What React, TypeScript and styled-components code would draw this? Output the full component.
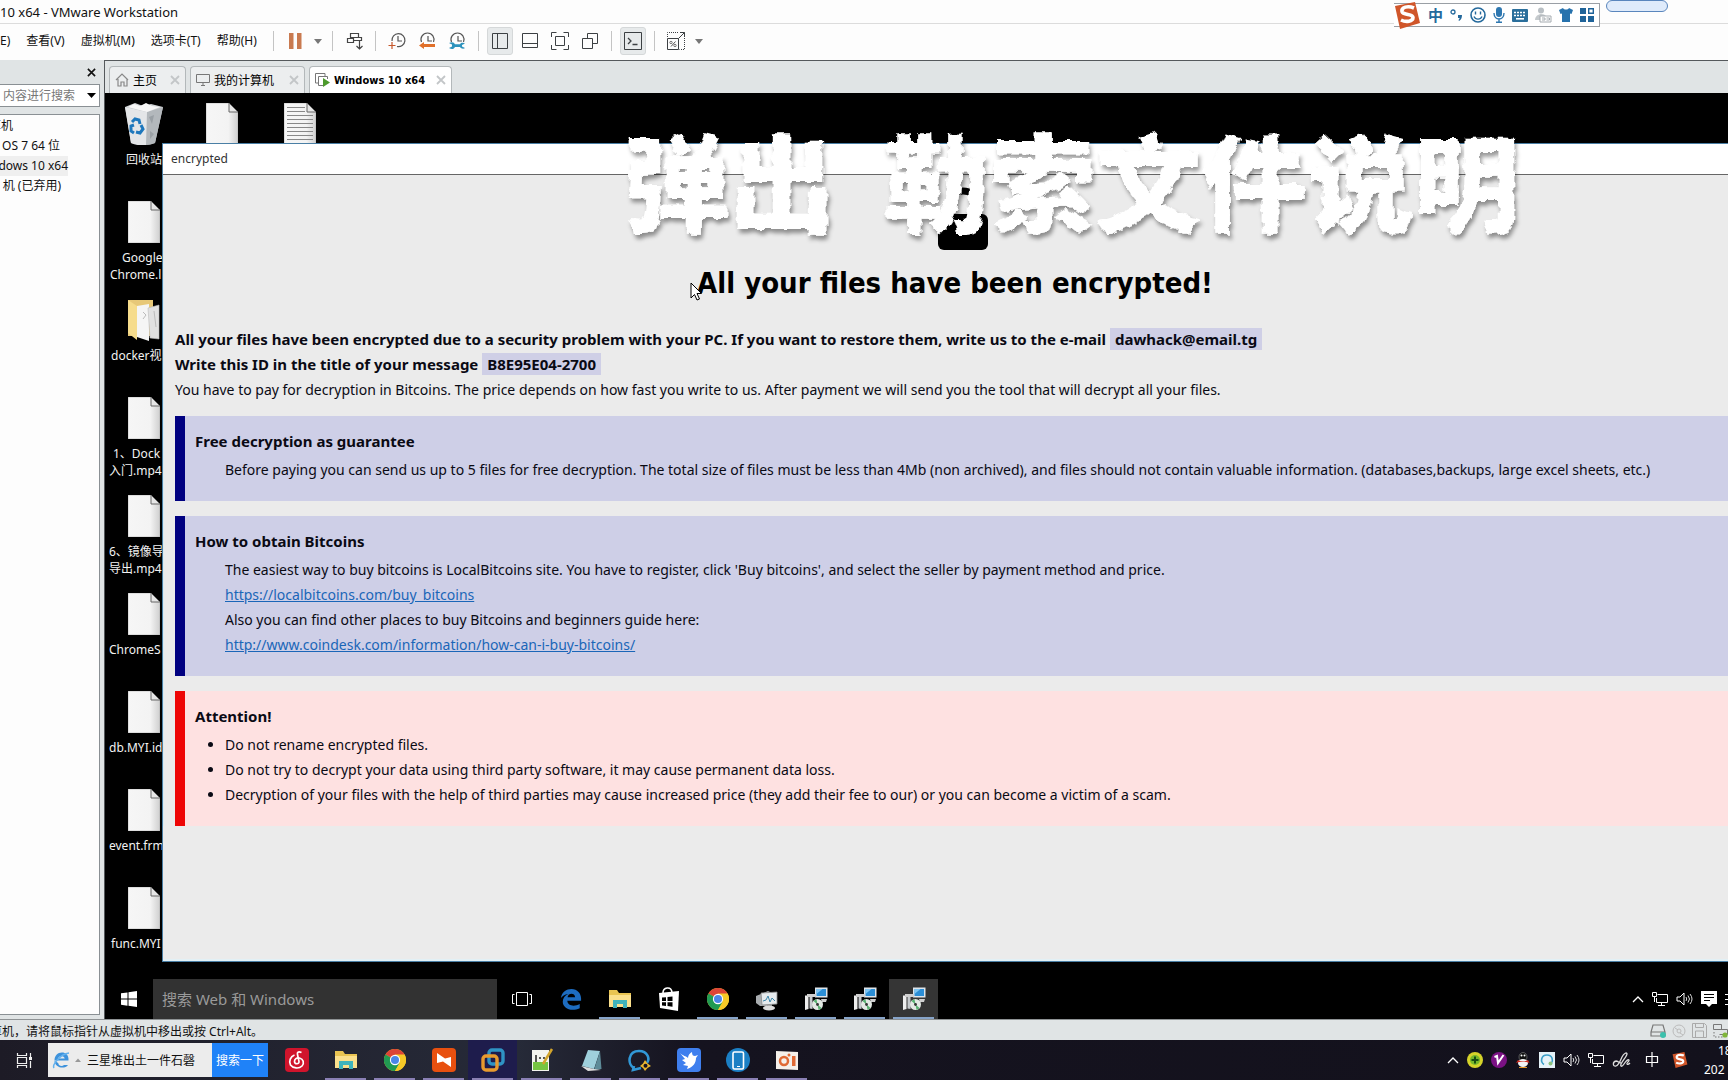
import React from "react";
import styled, { createGlobalStyle, css } from "styled-components";

const ui = `"Noto Sans", "Noto Sans CJK SC", sans-serif`;
const headFont = `"DejaVu Sans Condensed", "DejaVu Sans", sans-serif`;

const Global = createGlobalStyle`
  * { box-sizing: border-box; }
  body { margin: 0; overflow: hidden; font-family: ${ui}; font-size: 12px; color: #111; }
  button, input { font-family: inherit; }
  svg { display: block; flex: none; }
`;

const Screen = styled.div`
  position: relative;
  display: flex;
  flex-direction: column;
  height: 100vh;
  overflow: hidden;
  background: #e0e4e5;
`;

/* ---------- VMware chrome ---------- */

const TitleBar = styled.header`
  display: flex;
  align-items: center;
  height: 24px;
  background: #fdfdfd;
  border-bottom: 1px solid #dcdcdc;
  font-size: 13px;
  white-space: pre;
`;

const MenuBar = styled.nav`
  display: flex;
  align-items: center;
  height: 36px;
  padding-bottom: 2px;
  background: #fdfdfd;
`;

const Menus = styled.div`
  display: flex;
  gap: 16px;
  width: 273px;
`;

const MenuItem = styled.button`
  border: 0;
  padding: 0;
  background: none;
  color: #111;
  font-size: 12px;
  line-height: 20px;
  white-space: nowrap;
`;

const Divider = styled.span`
  width: 1px;
  height: 20px;
  background: #c4c4c4;
`;

const ToolGroup = styled.div`
  display: flex;
  align-items: center;
  gap: 4px;
  padding: 0 8px;
`;

const Tool = styled.button<{ $on?: boolean; $narrow?: boolean }>`
  display: grid;
  place-items: center;
  width: ${(p) => (p.$narrow ? 12 : 26)}px;
  height: 28px;
  padding: 0;
  border: 1px solid ${(p) => (p.$on ? "#d5d8d9" : "transparent")};
  border-radius: 3px;
  background: ${(p) => (p.$on ? "#e7eaeb" : "none")};
`;

const ImeBar = styled.div`
  position: absolute;
  top: 3px;
  right: 128px;
  display: flex;
  align-items: center;
  justify-content: space-between;
  width: 206px;
  height: 24px;
  padding: 0 5px 0 0;
  background: #fff;
  border: 1px solid #9a9fa5;
  border-left: 0;
`;

const ImeButton = styled.button`
  display: grid;
  place-items: center;
  padding: 0;
  border: 0;
  background: none;
  color: #24699c;
  font-size: 15px;
  font-weight: 700;
  line-height: 20px;
`;

const Pill = styled.div`
  position: absolute;
  top: 0;
  right: 60px;
  width: 62px;
  height: 12px;
  border: 1px solid #5a86bd;
  border-radius: 6px;
  background: #dfebfb;
`;

const Body = styled.div`
  display: flex;
  flex: 1;
  min-height: 0;
`;

const Sidebar = styled.aside`
  display: flex;
  flex-direction: column;
  width: 104px;
  padding: 0 4px 4px 0;
`;

const SideHead = styled.div`
  display: flex;
  align-items: center;
  justify-content: flex-end;
  height: 24px;
  padding-right: 4px;
`;

const IconButton = styled.button`
  display: grid;
  place-items: center;
  padding: 0;
  border: 0;
  background: none;
`;

const SideSearch = styled.div`
  display: flex;
  align-items: center;
  justify-content: flex-end;
  height: 23px;
  padding-right: 3px;
  border: 1px solid #8a9094;
  border-left: 0;
  background: #fff;
`;

const SideInput = styled.input`
  width: 74px;
  min-width: 0;
  margin-right: 12px;
  padding: 0;
  border: 0;
  outline: 0;
  background: none;
  font-size: 12px;
  text-align: right;
  &::placeholder { color: #777; opacity: 1; }
`;

const Tree = styled.ul`
  flex: 1;
  margin: 7px 0 0;
  padding: 1px 0;
  list-style: none;
  overflow: hidden;
  background: #fdfdfd;
  border: 1px solid #8a9094;
  border-left: 0;
`;

const TreeItem = styled.li<{ $end: number; $on?: boolean }>`
  display: flex;
  justify-content: flex-end;
  width: ${(p) => p.$end}px;
  height: 20px;
  line-height: 20px;
  font-size: 12px;
  white-space: nowrap;
  background: ${(p) => (p.$on ? "#efefef" : "none")};
`;

const Main = styled.main`
  display: flex;
  flex-direction: column;
  flex: 1;
  min-width: 0;
  border-left: 1px solid #55595c;
  border-top: 1px solid #55595c;
`;

const Tabs = styled.div`
  display: flex;
  align-items: flex-end;
  gap: 4px;
  height: 32px;
  padding-left: 4px;
`;

const Tab = styled.button<{ $on?: boolean; $w: number }>`
  display: flex;
  align-items: center;
  gap: 4px;
  width: ${(p) => p.$w}px;
  height: 27px;
  padding: 0 5px;
  border: 1px solid #b3b8ba;
  border-bottom: 0;
  border-radius: 4px 4px 0 0;
  background: ${(p) => (p.$on ? "#fff" : "#eceeef")};
  color: #000;
  font-size: ${(p) => (p.$on ? 11 : 12)}px;
  font-weight: ${(p) => (p.$on ? 700 : 400)};
  font-family: ${(p) => (p.$on ? headFont : "inherit")};
  white-space: nowrap;
`;

const TabText = styled.span`
  flex: 1;
  text-align: left;
`;

/* ---------- guest desktop ---------- */

const Guest = styled.section`
  position: relative;
  display: flex;
  flex-direction: column;
  flex: 1;
  min-height: 0;
  overflow: hidden;
  background: #000;
`;

const Desktop = styled.div`
  position: relative;
  flex: 1;
  min-height: 0;
  overflow: hidden;
`;

const IconGrid = styled.div`
  display: flex;
  align-items: flex-start;
  padding-top: 10px;
`;

const IconColumn = styled.div`
  display: flex;
  flex-direction: column;
  width: 78px;
`;

const DeskItem = styled.div`
  display: flex;
  flex-direction: column;
  align-items: center;
  height: 98px;
`;

const Label = styled.div<{ $indent: number; $first: number }>`
  width: 74px;
  margin-top: 6px;
  padding-left: ${(p) => p.$indent}px;
  text-indent: ${(p) => p.$first}px;
  color: #f2f2f2;
  font-size: 12px;
  line-height: 17px;
  white-space: pre;
`;

const Win = styled.article`
  position: absolute;
  top: 50px;
  left: 57px;
  right: -18px;
  bottom: 17px;
  display: flex;
  flex-direction: column;
  background: #ebebeb;
  border: 1px solid #4a7fa5;
  box-shadow: inset 0 -2px 0 #e2f0f5;
`;

const WinTitle = styled.div`
  height: 31px;
  padding-left: 8px;
  background: #fff;
  border-bottom: 1px solid #666;
  color: #333;
  font-size: 12px;
  line-height: 30px;
`;

const Note = styled.div`
  padding: 11px 0 0 11px;
  border-left: 1px solid #d8ecf4;
  font-family: ${ui};
  font-size: 14px;
  line-height: 25px;
  color: #0a0a14;
`;

const LockRow = styled.div`
  display: flex;
  justify-content: center;
  padding-left: 6px;
`;

const Heading = styled.h1`
  margin: 0;
  padding: 15px 10px 26px 0;
  font-family: ${headFont};
  font-size: 29px;
  line-height: 36px;
  text-align: center;
  color: #000;
`;

const Line = styled.p<{ $bold?: boolean }>`
  margin: 0;
  white-space: nowrap;
  font-size: ${(p) => (p.$bold ? 15 : 14)}px;
  font-weight: ${(p) => (p.$bold ? 700 : 400)};
`;

const Mark = styled.span`
  padding: 1px 5px;
  background: #cfcfe6;
`;

const Box = styled.section<{ $alert?: boolean }>`
  margin-top: 14px;
  padding: 13px 10px 19px;
  border-left: 10px solid ${(p) => (p.$alert ? "#ee0505" : "#000080")};
  background: ${(p) => (p.$alert ? "#fee1e1" : "#cecfe7")};
  & + & { margin-top: 15px; }
`;

const BoxTitle = styled.h2`
  margin: 0 0 3px;
  font-size: 15px;
  line-height: 25px;
`;

const Indent = styled.div`
  padding-left: 30px;
`;

const Bullets = styled.ul`
  margin: 0;
  padding-left: 30px;
`;

const Link = styled.a`
  color: #1a66b8;
`;

const Caption = styled.div`
  position: absolute;
  top: 20px;
  left: 518px;
  color: #fff;
  font-family: "Noto Sans CJK SC", sans-serif;
  font-size: 106px;
  font-weight: 900;
  line-height: 130px;
  white-space: pre;
  filter: url(#rough) drop-shadow(2px 4px 2px rgba(0, 0, 0, 0.4));
`;

const Pointer = styled.svg`
  position: absolute;
  top: 189px;
  left: 585px;
`;

const GuestBar = styled.footer`
  display: flex;
  height: 40px;
`;

const StartButton = styled.button`
  display: grid;
  place-items: center;
  width: 48px;
  padding: 0;
  border: 0;
  background: none;
`;

const GuestSearch = styled.input`
  width: 344px;
  padding: 0 9px;
  border: 0;
  background: #323232;
  color: #ddd;
  font-size: 15px;
  &::placeholder { color: #9a9a9a; opacity: 1; }
`;

const barLine = css<{ $line?: string }>`
  &::after {
    content: "";
    position: absolute;
    left: 4px;
    right: 4px;
    bottom: 0;
    height: 2px;
    background: ${(p) => p.$line || "transparent"};
  }
`;

const BarButton = styled.button<{ $line?: string; $on?: string }>`
  position: relative;
  display: grid;
  place-items: center;
  width: 49px;
  height: 40px;
  padding: 0;
  border: 0;
  background: ${(p) => p.$on || "none"};
  ${barLine}
`;

const Tray = styled.div<{ $gap: number }>`
  display: flex;
  align-items: center;
  justify-content: flex-end;
  gap: ${(p) => p.$gap}px;
  margin-left: auto;
`;

const Status = styled.div`
  display: flex;
  align-items: center;
  height: 21px;
  padding-top: 1px;
  border-top: 1px solid #8e9294;
  font-size: 12px;
`;

const StatusText = styled.span`
  display: flex;
  justify-content: flex-end;
  width: 263px;
  white-space: nowrap;
`;

/* ---------- host taskbar ---------- */

const HostBar = styled.footer`
  display: flex;
  height: 40px;
  background: linear-gradient(90deg, #1d1b26 0, #262a38 30%, #15131f 40%, #13111c 100%);
`;

const HostSearch = styled.form`
  display: flex;
  align-items: center;
  width: 220px;
  height: 34px;
  margin: 3px 4px 0 0;
  background: #ececec;
`;

const HostInput = styled.input`
  flex: 1;
  min-width: 0;
  padding: 0 0 0 5px;
  border: 0;
  background: none;
  font-size: 12px;
  color: #111;
`;

const HostGo = styled.button`
  width: 56px;
  height: 34px;
  padding: 0;
  border: 0;
  background: #1f82f8;
  color: #fff;
  font-size: 12px;
`;

const Clock = styled.time`
  width: 32px;
  padding-left: 8px;
  overflow: hidden;
  color: #fff;
  font-size: 12px;
  line-height: 19px;
  white-space: nowrap;
`;

const ClockHour = styled.span`
  display: block;
  padding-left: 14px;
`;

/* ---------- drawings ---------- */

const Svg = ({ w, h = w, v, children }: { w: number; h?: number; v?: string; children: React.ReactNode }) => (
  <svg width={w} height={h} viewBox={v || `0 0 ${w} ${h}`} fill="none" aria-hidden="true">
    {children}
  </svg>
);

const Caret = () => <Svg w={8} h={5}><path d="M0 0h8L4 5z" fill="#777" /></Svg>;
const Cross = ({ c = "#c3c6c8", s = 10 }: { c?: string; s?: number }) => (
  <Svg w={s} v="0 0 10 10"><path d="M1 1l8 8M9 1L1 9" stroke={c} strokeWidth="1.8" /></Svg>
);
const ClockArt = ({ kind }: { kind: "add" | "back" | "tool" }) => (
  <Svg w={18}>
    <path d={kind === "add" ? "M4 9A6.500 6.500 0 1 1 9 14.500" : "M3.500 10A6.500 6.500 0 1 1 15.500 10"} stroke="#555" strokeWidth="1.2" />
    <path d="M10 4v5h4" stroke="#555" strokeWidth="1.2" />
    {kind === "add" && <path d="M4 10v7M0.5 13.5h7" stroke="#c5572b" strokeWidth="1.2" />}
    {kind === "back" && <path d="M1 13.5l5-3.5v2h11v3H6v2z" fill="#e0702a" />}
    {kind === "tool" && <path d="M1 11l3 1.500v2L1 16c3 2 5 1 6-1h5c1 2 4 2 5 1l-3-1.500v-1.500l3-1.500c-2-1-4-1-5 .8H7C6 10 4 9.500 1 11z" fill="#2e93bd" />}
  </Svg>
);

const FileArt = ({ lines }: { lines?: boolean }) => (
  <Svg w={32} h={42}>
    <defs>
      <linearGradient id="paper" x1="0" y1="0" x2="1" y2="0">
        <stop offset="0" stopColor="#f6f6f6" /><stop offset=".7" stopColor="#f3f3f3" /><stop offset="1" stopColor="#cfcfcf" />
      </linearGradient>
    </defs>
    <path d="M0 0h23l9 9v33H0z" fill="url(#paper)" stroke="#aaa" strokeWidth=".6" />
    <path d="M23 0v9h9z" fill="#e6e6e6" stroke="#666" strokeWidth="1" />
    {lines && <path d="M3 4.500h18M3 8.500h18M3 12.500h26M3 16.500h26M3 20.500h26M3 24.500h26M3 28.500h26M3 32.500h26M3 36.500h26" stroke="#888" />}
  </Svg>
);

const BinArt = () => (
  <Svg w={38} h={42}>
    <path d="M0 4l6 36q13 4 24 0l8-36-12-3-8 2-8-3z" fill="#cfd2d5" />
    <path d="M0 4l22 5 16-5-8 36q-4 2-9 2z" fill="#b3b8bc" />
    <path d="M0 4l22 5-1 33Q12 43 6 40z" fill="#e4e6e8" />
    <path d="M3 4l6-3 6 2 6-3 6 3 8 1-13 5z" fill="#f7f7f7" />
    <path d="M24 14l5-2-2 9zM25 28l4 3-4 5z" fill="#9aa0a5" />
    <path d="M7 19l3-3 4 1 1 4M16 22l2 4-3 4-4-1M9 30l-3-2 0-5 3-1" stroke="#1e78bd" strokeWidth="3" />
  </Svg>
);

const FolderOpenArt = () => (
  <Svg w={32} h={42}>
    <path d="M0 1h25v36H0z" fill="#e7c878" />
    <path d="M0 1l9 6v34l-9-7z" fill="#f6dc8c" />
    <path d="M9 7l12-2v37L9 38z" fill="#f5f5f5" />
    <path d="M20 9l11-3v34l-9-1z" fill="#e1e1e1" stroke="#bbb" strokeWidth=".6" />
    <path d="M15 13l3 3-3 4M26 12l2 16" stroke="#bbb" />
  </Svg>
);

const ChromeArt = ({ s = 22 }: { s?: number }) => (
  <Svg w={s} v="0 0 24 24">
    <circle cx="12" cy="12" r="12" fill="#f6c927" />
    <path d="M12 12L1.600 6A12 12 0 0 1 22.400 6z" fill="#dc4437" />
    <path d="M12 12L1.600 6A12 12 0 0 0 12 24l5.200-9z" fill="#219a52" />
    <path d="M12 6h10.400A12 12 0 0 1 12 24l5.200-9z" fill="#f6c927" />
    <circle cx="12" cy="12" r="5.600" fill="#fff" />
    <circle cx="12" cy="12" r="4.400" fill="#4a86e8" />
  </Svg>
);

const ExplorerArt = () => (
  <Svg w={22} h={20}>
    <path d="M0 1h8l2 3h12v14H0z" fill="#e9c452" />
    <path d="M0 6h22v12H0z" fill="#fbe08c" />
    <path d="M4 19v-8h14v8h-4v-4H8v4z" fill="#3fb3bb" />
  </Svg>
);

const EdgeArt = () => (
  <Svg w={22} v="0 0 24 24">
    <path d="M1 11C2 4 7 1 12.500 1 19 1 23 6 23 11.500V14H8c.4 6 8 6.500 13.500 3.500v4.500C12 26.500 3 22 3 15c0-4 2.500-7 6-8.500C5 7 2.500 9 1 11zm7.200-1h8.300c-.2-5-7.500-5-8.300 0z" fill="#1d6cc0" fillRule="evenodd" />
  </Svg>
);

const StoreArt = () => (
  <Svg w={22} h={24}>
    <path d="M1 6l20-2-1 20-18-3z" fill="#fff" />
    <path d="M5 6c0-6 8-7 9-1" stroke="#fff" strokeWidth="1.600" />
    <path d="M4 10.500l4-.3v3.800H4zM9.500 10l5-.4V14h-5zM4 15.200h4V19l-4-.4zM9.500 15.200h5v4.500l-5-.6z" fill="#000" />
  </Svg>
);

const PerfArt = () => (
  <Svg w={24} h={24}>
    <path d="M1 9l12-5 4 2v13l-12 0-4-3z" fill="#a9adb0" />
    <path d="M6 6l16-1v12l-15 1z" fill="#e6ebee" stroke="#888" strokeWidth=".8" />
    <path d="M8 14l3-1 2-4 2 6 2-4 3 3" stroke="#3d87aa" />
    <path d="M12 18h5v2h-5z" fill="#888" />
    <ellipse cx="14" cy="21" rx="6" ry="2.500" fill="#ddd" />
  </Svg>
);

const SetupArt = () => (
  <Svg w={24} h={24}>
    <path d="M1 8.500h3.500V22L1 23z" fill="#eee" />
    <path d="M5.500 8h3v14l-3-.5z" fill="#c6cacd" />
    <path d="M11 .5h12.500v10H11z" fill="#dfe5ea" />
    <path d="M12.500 2h9.500v7h-9.500z" fill="#2b8ed6" />
    <path d="M12.500 2h6l-6 5z" fill="#7cc4f2" />
    <path d="M3 7h9v3H3zM17 12h6l-1 3h-4z" fill="#cfcfcf" />
    <circle cx="13.500" cy="17.500" r="5.500" fill="#e3e9e4" />
    <path d="M13.500 17.500l-4-3.500a5.500 5.500 0 0 1 3-1.800zM13.500 17.500l4 3.500a5.500 5.500 0 0 1-3 1.800z" fill="#58b370" />
    <circle cx="13.500" cy="17.500" r="1.400" fill="#333" />
  </Svg>
);

const ChevronArt = () => <Svg w={12} h={8}><path d="M1 7l5-5 5 5" stroke="#fff" strokeWidth="1.300" /></Svg>;
const NetArt = () => (
  <Svg w={16} h={14}>
    <path d="M5.500 2.500h10v8h-11V6M0.500 0.500h4v4h-4zM2.500 5v5M9.500 10v3M6 13.500h7" stroke="#fff" />
  </Svg>
);
const SoundArt = () => (
  <Svg w={17} h={14}>
    <path d="M1 5h3l4-4v12L4 9H1z" stroke="#fff" />
    <path d="M10 5q1.500 2 0 4M12 3.500q3 3.500 0 7M14 2q4 5 0 10" stroke="#ddd" />
  </Svg>
);
const SogouArt = ({ s }: { s: number }) => (
  <Svg w={s} v="0 0 27 27">
    <path d="M1 4L21 0l5 21-20 6z" fill="#d0562a" />
    <path d="M20 6C14 3.500 7 5 8 9.500c1 4 11 2 11 6 0 4-7 5-12 2.500" stroke="#fff" strokeWidth="3.600" />
  </Svg>
);

const fileLabels: { text: string; indent: number; first: number; art: React.ReactNode }[] = [
  { text: "回收站", indent: 19, first: 0, art: <BinArt /> },
  { text: "Google\nChrome.l", indent: 3, first: 12, art: <FileArt /> },
  { text: "docker视", indent: 4, first: 0, art: <FolderOpenArt /> },
  { text: "1、Dock\n入门.mp4", indent: 2, first: 4, art: <FileArt /> },
  { text: "6、镜像导\n导出.mp4", indent: 2, first: 0, art: <FileArt /> },
  { text: "ChromeS", indent: 2, first: 0, art: <FileArt /> },
  { text: "db.MYI.id", indent: 2, first: 0, art: <FileArt /> },
  { text: "event.frm", indent: 2, first: 0, art: <FileArt /> },
  { text: "func.MYI", indent: 4, first: 0, art: <FileArt /> },
];

const guestLine = "#86a3c8";
const hostLine = "#8a80b4";

const guestApps: { name: string; art: React.ReactNode; line?: string; on?: string }[] = [
  { name: "Task view", art: <Svg w={20} h={14}><path d="M4.500 0.500h11v13h-11zM2.500 2.500h-2v9h2M17.500 2.500h2v9h-2" stroke="#fff" /></Svg> },
  { name: "Edge", art: <EdgeArt /> },
  { name: "Explorer", art: <ExplorerArt />, line: guestLine },
  { name: "Store", art: <StoreArt /> },
  { name: "Chrome", art: <ChromeArt />, line: guestLine },
  { name: "Monitor", art: <PerfArt />, line: guestLine },
  { name: "Setup 1", art: <SetupArt />, line: guestLine },
  { name: "Setup 2", art: <SetupArt />, line: guestLine },
  { name: "Setup 3", art: <SetupArt />, line: guestLine, on: "#353535" },
];

const hostApps: { name: string; art: React.ReactNode; line?: string; on?: string }[] = [
  { name: "Music", art: (
    <Svg w={24}><rect width="24" height="24" rx="4" fill="#d0142c" />
      <path d="M16.500 4.500c-3.500-1.500-4.500 0-4 2l1.500 7c.5 3-4.500 3-4.500 0 0-2.500 2-4 5-3.500 4 1 5 5 2.500 8-3 3-9 2.500-11.500-1C3.500 13 5.500 8.500 9.500 7" stroke="#fff" strokeWidth="1.700" /></Svg>) },
  { name: "Explorer", art: <ExplorerArt />, line: hostLine },
  { name: "Chrome", art: <ChromeArt />, line: hostLine },
  { name: "Xmind", art: (
    <Svg w={24}><rect width="24" height="24" rx="4" fill="#e8500f" /><path d="M5 5l8 5.500 6-1.500v10l-8-5.500L5 15z" fill="#fff" /></Svg>), line: hostLine },
  { name: "VMware", art: (
    <Svg w={24}><rect x="8" y="2" width="14" height="14" rx="3" stroke="#2f93c4" strokeWidth="3.400" /><rect x="2" y="8" width="14" height="14" rx="3" stroke="#e89a2e" strokeWidth="3.400" /></Svg>), line: hostLine, on: "#1e1c4c" },
  { name: "Notepad++", art: (
    <Svg w={24}><path d="M2 2h17v21H2z" fill="#f4f4ee" /><path d="M3 14h15v8H3z" fill="#76c442" /><path d="M6 7v7M9 10h2M13 10h2" stroke="#222" strokeWidth="1.500" /><path d="M22 1L13 16" stroke="#d3a52c" strokeWidth="2.500" /></Svg>), line: hostLine },
  { name: "Notebook", art: (
    <Svg w={24}><path d="M9 2l12 1-6 18-12-3z" fill="#9fd0dc" /><path d="M21 3l1.500 18-7.500 1z" fill="#5e8b98" /><path d="M2 18l13 3 7 1-13 1z" fill="#ddd" /></Svg>), line: hostLine },
  { name: "Chat", art: (
    <Svg w={24}><path d="M6 20c-7-4-6-17 5-17 9 0 11 8 8 12M6 18l-1 4 8-2" stroke="#3198d6" strokeWidth="2.600" /><path d="M17 12l2.500 3.500L23 18l-3.500 2L17 23l-2-3-3-2 3-2.500z" fill="#e9b62f" /><circle cx="17.500" cy="17.800" r="2" fill="#15131f" /></Svg>), line: hostLine },
  { name: "Bird", art: (
    <Svg w={24}><rect width="24" height="24" rx="4" fill="#3f7fee" /><path d="M3 5c3 3 6 3 8 5 0-3 2-5 4-6 0 3 1 4 3 4l3-1-2 3c0 5-3 9-9 11l1-3-5-1 3-2-4-3 3-1z" fill="#fff" /></Svg>), line: hostLine },
  { name: "Phone", art: (
    <Svg w={24}><circle cx="12" cy="12" r="12" fill="#1b7fc4" /><rect x="7" y="4" width="10.500" height="17" rx="1.500" stroke="#fff" strokeWidth="1.600" /><path d="M11 18.500h3" stroke="#fff" /></Svg>), line: hostLine },
  { name: "Recorder", art: (
    <Svg w={22} h={20}><path d="M0 1l22 1v18l-22-1z" fill="#f5f0ea" /><circle cx="8" cy="11" r="4" stroke="#e06a35" strokeWidth="2.500" /><circle cx="13" cy="5" r="1.500" fill="#e06a35" /><path d="M16 6h3.500v10H16z" fill="#e06a35" /></Svg>), line: hostLine },
];

export default function App() {
  return (
    <>
      <Global />
      <Screen>
        <TitleBar>10 x64 - VMware Workstation</TitleBar>
        <MenuBar>
          <Menus>
            <MenuItem>E)</MenuItem>
            <MenuItem>查看(V)</MenuItem>
            <MenuItem>虚拟机(M)</MenuItem>
            <MenuItem>选项卡(T)</MenuItem>
            <MenuItem>帮助(H)</MenuItem>
          </Menus>
          <Divider />
          <ToolGroup>
            <Tool aria-label="Pause"><Svg w={13} h={16}><path d="M0 0h4.500v16H0zM8 0h4.500v16H8z" fill="#c97a50" /></Svg></Tool>
            <Tool $narrow aria-label="Power options"><Caret /></Tool>
          </ToolGroup>
          <Divider />
          <ToolGroup>
            <Tool aria-label="Send keys"><Svg w={17}><path d="M4.500.500h8v4h-8zM6.500 9.500h-5v-4h6v4zM8 7.500h7.500V4.500h-3M13.500 8v8M10.500 13l3 3 3-3" stroke="#444" strokeWidth="1.200" /></Svg></Tool>
          </ToolGroup>
          <Divider />
          <ToolGroup>
            <Tool aria-label="Take snapshot"><ClockArt kind="add" /></Tool>
            <Tool aria-label="Revert snapshot"><ClockArt kind="back" /></Tool>
            <Tool aria-label="Manage snapshots"><ClockArt kind="tool" /></Tool>
          </ToolGroup>
          <Divider />
          <ToolGroup>
            <Tool $on aria-label="Library"><Svg w={16}><path d="M.5.500h15v15H.5zM5.500 1v14" stroke="#3c4043" /></Svg></Tool>
            <Tool aria-label="Thumbnails"><Svg w={16}><path d="M.5.500h15v14H.5zM1 10.500h14" stroke="#3c4043" /></Svg></Tool>
            <Tool aria-label="Full screen"><Svg w={18}><path d="M.5 5V.5h5M12.500.500h5V5M17.500 13v4.500h-5M5.500 17.500h-5V13M4.500 4.500h9v9h-9z" stroke="#3c4043" /></Svg></Tool>
            <Tool aria-label="Unity"><Svg w={16}><path d="M.5 5.500h10v10H.5zM5.500 5V.5h10v10H11" stroke="#3c4043" /></Svg></Tool>
          </ToolGroup>
          <Divider />
          <ToolGroup>
            <Tool $on aria-label="Console"><Svg w={18}><path d="M.5.500h17v17H.5z" stroke="#3c4043" /><path d="M4 6l3 3-3 3M8.500 12.500h5" stroke="#3c4043" strokeWidth="1.300" /></Svg></Tool>
          </ToolGroup>
          <Divider />
          <ToolGroup>
            <Tool aria-label="Stretch"><Svg w={18}><path d="M.5 6.500h11v11H.5zM11.500 6.500l6-6M13 .5h4.500V5" stroke="#3c4043" /><path d="M.5 5V.5h11M17.500 6v11.500h-5" stroke="#3c4043" strokeDasharray="1 1" /><path d="M4 14.500l4.500-5" stroke="#555" /><circle cx="4" cy="10.500" r="1.200" stroke="#555" strokeWidth=".8" /><circle cx="8" cy="13.500" r="1.200" stroke="#555" strokeWidth=".8" /></Svg></Tool>
            <Tool $narrow aria-label="Stretch options"><Caret /></Tool>
          </ToolGroup>
        </MenuBar>

        <ImeBar>
          <SogouArt s={27} />
          <ImeButton>中</ImeButton>
          <ImeButton aria-label="Punctuation"><Svg w={13} h={14}><circle cx="3" cy="4" r="2" stroke="#24699c" strokeWidth="1.300" /><path d="M8 7h4c0 3-1 5-3 6l-.5-1c1-1 1-1.500 1-2H8z" fill="#24699c" /></Svg></ImeButton>
          <ImeButton aria-label="Emoji"><Svg w={16}><circle cx="8" cy="8" r="7" stroke="#24699c" strokeWidth="1.600" /><path d="M5.500 4.500v3M10.500 4.500v3M4 9.500c1.500 3.500 6.500 3.500 8 0" stroke="#24699c" strokeWidth="1.400" /></Svg></ImeButton>
          <ImeButton aria-label="Voice"><Svg w={12} h={16}><rect x="3" width="6" height="10" rx="3" fill="#2e77b0" /><path d="M1 6c0 8 10 8 10 0M6 12v3.500M3 15.300h6" stroke="#2e77b0" strokeWidth="1.400" /></Svg></ImeButton>
          <ImeButton aria-label="Keyboard"><Svg w={16} h={13}><rect width="16" height="13" rx="1" fill="#2b6f9c" /><path d="M2 3.500h12M2 6.500h12" stroke="#fff" strokeWidth="1.700" strokeDasharray="2 1" /><path d="M4 9.800h8" stroke="#fff" strokeWidth="1.600" /></Svg></ImeButton>
          <ImeButton aria-label="User dictionary"><Svg w={17} h={16}><circle cx="6" cy="3.500" r="3" fill="#b9bfc4" /><path d="M0 13c0-6 8-8 11-4v4z" fill="#c5cacd" /><path d="M5 9h11v6H5z" fill="#fff" stroke="#a5abb0" /><path d="M7 11h3v2H7M11.500 11h3v2h-3" stroke="#a5abb0" /></Svg></ImeButton>
          <ImeButton aria-label="Skin"><Svg w={14}><path d="M4 0c1 2 5 2 6 0l4 2-1.500 4-1.500-.5V14H3V5.500L1.500 6 0 2z" fill="#2672ad" /></Svg></ImeButton>
          <ImeButton aria-label="Toolbox"><Svg w={14}><path d="M0 0h6v6H0zM0 8h6v6H0zM8 8h6v6H8z" fill="#1f6399" /><path d="M8.700.700h4.600v4.600H8.700z" stroke="#1f6399" strokeWidth="1.400" /></Svg></ImeButton>
        </ImeBar>
        <Pill />

        <Body>
          <Sidebar>
            <SideHead><IconButton aria-label="Close library"><Cross c="#111" s={9} /></IconButton></SideHead>
            <SideSearch>
              <SideInput aria-label="Search library" placeholder="内容进行搜索" />
              <IconButton aria-label="Search options"><Svg w={9} h={5}><path d="M0 0h9L4.500 5z" fill="#000" /></Svg></IconButton>
            </SideSearch>
            <Tree>
              <TreeItem $end={13}>算机</TreeItem>
              <TreeItem $end={60}>OS 7 64 位</TreeItem>
              <TreeItem $end={68} $on>dows 10 x64</TreeItem>
              <TreeItem $end={61}>机 (已弃用)</TreeItem>
            </Tree>
          </Sidebar>

          <Main>
            <Tabs>
              <Tab $w={77}><Svg w={14}><path d="M1 7l6-6 6 6M3 6v7h3V9h3v4h3V6" stroke="#888" strokeWidth="1.200" /></Svg><TabText>主页</TabText><Cross /></Tab>
              <Tab $w={115}><Svg w={14} h={12}><path d="M.5.500h13v8H.5zM5 11.500h4M7 9v2" stroke="#777" /></Svg><TabText>我的计算机</TabText><Cross /></Tab>
              <Tab $w={143} $on><Svg w={15} h={14}><path d="M3 10H.5V.500H10V3M9 12.500H3.500v-9h9V6" stroke="#777" /><path d="M8 5l7 4.500L8 14z" fill="#4d9a2d" /></Svg><TabText>Windows 10 x64</TabText><Cross /></Tab>
            </Tabs>

            <Guest>
              <Desktop>
                <IconGrid>
                  <IconColumn>
                    {fileLabels.map((f) => (
                      <DeskItem key={f.text}>
                        {f.art}
                        <Label $indent={f.indent} $first={f.first}>{f.text}</Label>
                      </DeskItem>
                    ))}
                  </IconColumn>
                  <IconColumn><DeskItem><FileArt /></DeskItem></IconColumn>
                  <IconColumn><DeskItem><FileArt lines /></DeskItem></IconColumn>
                </IconGrid>

                <Win>
                  <WinTitle>encrypted</WinTitle>
                  <Note>
                    <LockRow>
                      <Svg w={50} h={64}>
                        <path d="M11 32V17C11 1 39 1 39 17v15" stroke="#000" strokeWidth="7" />
                        <rect y="28" width="50" height="36" rx="6" fill="#000" />
                      </Svg>
                    </LockRow>
                    <Heading>All your files have been encrypted!</Heading>
                    <Line $bold>All your files have been encrypted due to a security problem with your PC. If you want to restore them, write us to the e-mail <Mark>dawhack@email.tg</Mark></Line>
                    <Line $bold>Write this ID in the title of your message <Mark>B8E95E04-2700</Mark></Line>
                    <Line>You have to pay for decryption in Bitcoins. The price depends on how fast you write to us. After payment we will send you the tool that will decrypt all your files.</Line>
                    <Box>
                      <BoxTitle>Free decryption as guarantee</BoxTitle>
                      <Indent>
                        <Line>Before paying you can send us up to 5 files for free decryption. The total size of files must be less than 4Mb (non archived), and files should not contain valuable information. (databases,backups, large excel sheets, etc.)</Line>
                      </Indent>
                    </Box>
                    <Box>
                      <BoxTitle>How to obtain Bitcoins</BoxTitle>
                      <Indent>
                        <Line>The easiest way to buy bitcoins is LocalBitcoins site. You have to register, click 'Buy bitcoins', and select the seller by payment method and price.</Line>
                        <Line><Link href="#buy">https://localbitcoins.com/buy_bitcoins</Link></Line>
                        <Line>Also you can find other places to buy Bitcoins and beginners guide here:</Line>
                        <Line><Link href="#guide">http://www.coindesk.com/information/how-can-i-buy-bitcoins/</Link></Line>
                      </Indent>
                    </Box>
                    <Box $alert>
                      <BoxTitle>Attention!</BoxTitle>
                      <Bullets>
                        <li>Do not rename encrypted files.</li>
                        <li>Do not try to decrypt your data using third party software, it may cause permanent data loss.</li>
                        <li>Decryption of your files with the help of third parties may cause increased price (they add their fee to our) or you can become a victim of a scam.</li>
                      </Bullets>
                    </Box>
                  </Note>
                </Win>

                <svg width="0" height="0" aria-hidden="true">
                  <filter id="rough" x="-2%" y="-5%" width="104%" height="110%">
                    <feTurbulence type="fractalNoise" baseFrequency="0.12" numOctaves="2" seed="4" result="n" />
                    <feDisplacementMap in="SourceGraphic" in2="n" scale="7" xChannelSelector="R" yChannelSelector="G" />
                  </filter>
                </svg>
                <Caption>弹出  勒索文件说明</Caption>
                <Pointer width="12" height="19" viewBox="0 0 12 19" aria-hidden="true">
                  <path d="M1 1v15l3.500-3.500L7 18l2.500-1-2.500-5.500h4.500z" fill="#fff" stroke="#000" />
                </Pointer>
              </Desktop>

              <GuestBar>
                <StartButton aria-label="Start">
                  <Svg w={16}><path d="M0 2.300l6.500-.9v6.200H0zM7.500 1.200L16 0v7.600H7.500zM0 8.500h6.500v6.200L0 13.800zM7.500 8.500H16V16l-8.500-1.200z" fill="#fff" /></Svg>
                </StartButton>
                <GuestSearch aria-label="Search" placeholder="搜索 Web 和 Windows" />
                {guestApps.map((a) => (
                  <BarButton key={a.name} aria-label={a.name} $line={a.line} $on={a.on}>{a.art}</BarButton>
                ))}
                <Tray $gap={8}>
                  <ChevronArt />
                  <NetArt />
                  <SoundArt />
                  <Svg w={16}><path d="M0 0h16v13h-5l-3 3-3-3H0z" fill="#fff" /><path d="M3 3.500h10M3 6.500h10M3 9.500h6" stroke="#000" /></Svg>
                  <Svg w={3} h={13}><path d="M0 1.500h3M0 6.500h3M0 11.500h3" stroke="#fff" /></Svg>
                </Tray>
              </GuestBar>
            </Guest>
          </Main>
        </Body>

        <Status>
          <StatusText>算机，请将鼠标指针从虚拟机中移出或按 Ctrl+Alt。</StatusText>
          <Tray $gap={6}>
            <Svg w={16} h={14}><path d="M3 1h10l2 7v4H1V8zM1 8h14" stroke="#777" strokeWidth="1.200" /><circle cx="13" cy="11" r="3" fill="#3cc0ac" /></Svg>
            <Svg w={14}><circle cx="7" cy="7" r="6" stroke="#bbb" /><circle cx="7" cy="7" r="2" stroke="#bbb" /><path d="M3 4l3 2M8 9l3 2" stroke="#bbb" /></Svg>
            <Svg w={15}><path d="M.5.500h12l2 2v12H.5zM3.500.500v4h8v-4M3.500 14V8h8v6" stroke="#aaa" /></Svg>
            <Svg w={15} h={14}><path d="M.5.500h8v5h-8zM6.500 5.500h8v5h-8" stroke="#777" /><path d="M1 8v5h9" stroke="#777" strokeDasharray="1.500 1.500" /><circle cx="12" cy="11" r="2.600" fill="#7fb53a" /></Svg>
          </Tray>
        </Status>

        <HostBar>
          <StartButton aria-label="Task view">
            <Svg w={17} h={15}><path d="M1.500 0v2.500h9V0M1.500 15v-2.500h9V15M1.500 4.500h9v6h-9zM14.500 0v4M14.500 8v7" stroke="#eee" strokeWidth="1.200" /><path d="M13 4h3v3h-3z" fill="#eee" /></Svg>
          </StartButton>
          <HostSearch>
            <Svg w={34} h={20}>
              <path d="M6 10.500h14.500C21 5 17.500 2.500 14 2.500c-4.500 0-7.500 3.500-7.500 8 0 7 10 9.500 13.500 4.500h-4c-2 2-5.500 1-5.800-2M10.200 8.500c.5-3.500 6-3.500 6.500 0z" fill="#3d92dc" fillRule="evenodd" />
              <path d="M6 18c-2-3 6-14 15-15" stroke="#64b2ee" strokeWidth="1.500" />
              <path d="M27 12l3-3.500 3 3.500z" fill="#999" />
            </Svg>
            <HostInput aria-label="Host search" defaultValue="三星堆出土一件石磬" />
            <HostGo type="button">搜索一下</HostGo>
          </HostSearch>
          {hostApps.map((a) => (
            <BarButton key={a.name} aria-label={a.name} $line={a.line} $on={a.on}>{a.art}</BarButton>
          ))}
          <Tray $gap={8}>
            <ChevronArt />
            <Svg w={16}><circle cx="8" cy="8" r="8" fill="#d5d32a" /><circle cx="8" cy="8" r="5" fill="#77b82a" /><path d="M8 4.500v7M4.500 8h7" stroke="#174d12" strokeWidth="2" /></Svg>
            <Svg w={16}><circle cx="8" cy="8" r="8" fill="#7b1284" /><path d="M3.500 5L6 4l1 7 5.500-8" stroke="#fff" strokeWidth="2" /></Svg>
            <Svg w={16}><ellipse cx="8" cy="5" rx="4" ry="4.500" fill="#111" stroke="#888" strokeWidth=".6" /><ellipse cx="8" cy="11" rx="5" ry="4" fill="#f4f4f4" /><path d="M3 8q5 3 10 0l1.500 3-3-1H4l-3 1z" fill="#d12b20" /><circle cx="6.500" cy="3.500" r="1" fill="#fff" /><circle cx="9.500" cy="3.500" r="1" fill="#fff" /><path d="M4 15.500h8" stroke="#e99a26" /></Svg>
            <Svg w={16}><path d="M0 0h16v16H0z" fill="#e6f2f8" /><path d="M5 12.500C1 10 2 3 8 3s6 6 4.500 8" stroke="#3c9fc8" strokeWidth="1.600" /><circle cx="11.500" cy="11.500" r="2" fill="#8bc27d" /></Svg>
            <SoundArt />
            <NetArt />
            <Svg w={20} h={18}><path d="M4 10c-4 1-3 6 0 5 3-1 4-5 6-9s5-5 5-3-4 6-6 10c-1 3 1 3 3 0s4-5 5-4-3 3-2 4 2 0 3-1M4 10c2 0 3 2 5 2" stroke="#ddd" strokeWidth="1.300" /></Svg>
            <Svg w={24} h={18} v="-6 0 24 18"><path d="M0.500 5.500h11v6h-11zM6 1v15" stroke="#fff" strokeWidth="1.200" /></Svg>
            <SogouArt s={16} />
            <Clock><ClockHour>18</ClockHour>202</Clock>
          </Tray>
        </HostBar>
      </Screen>
    </>
  );
}
